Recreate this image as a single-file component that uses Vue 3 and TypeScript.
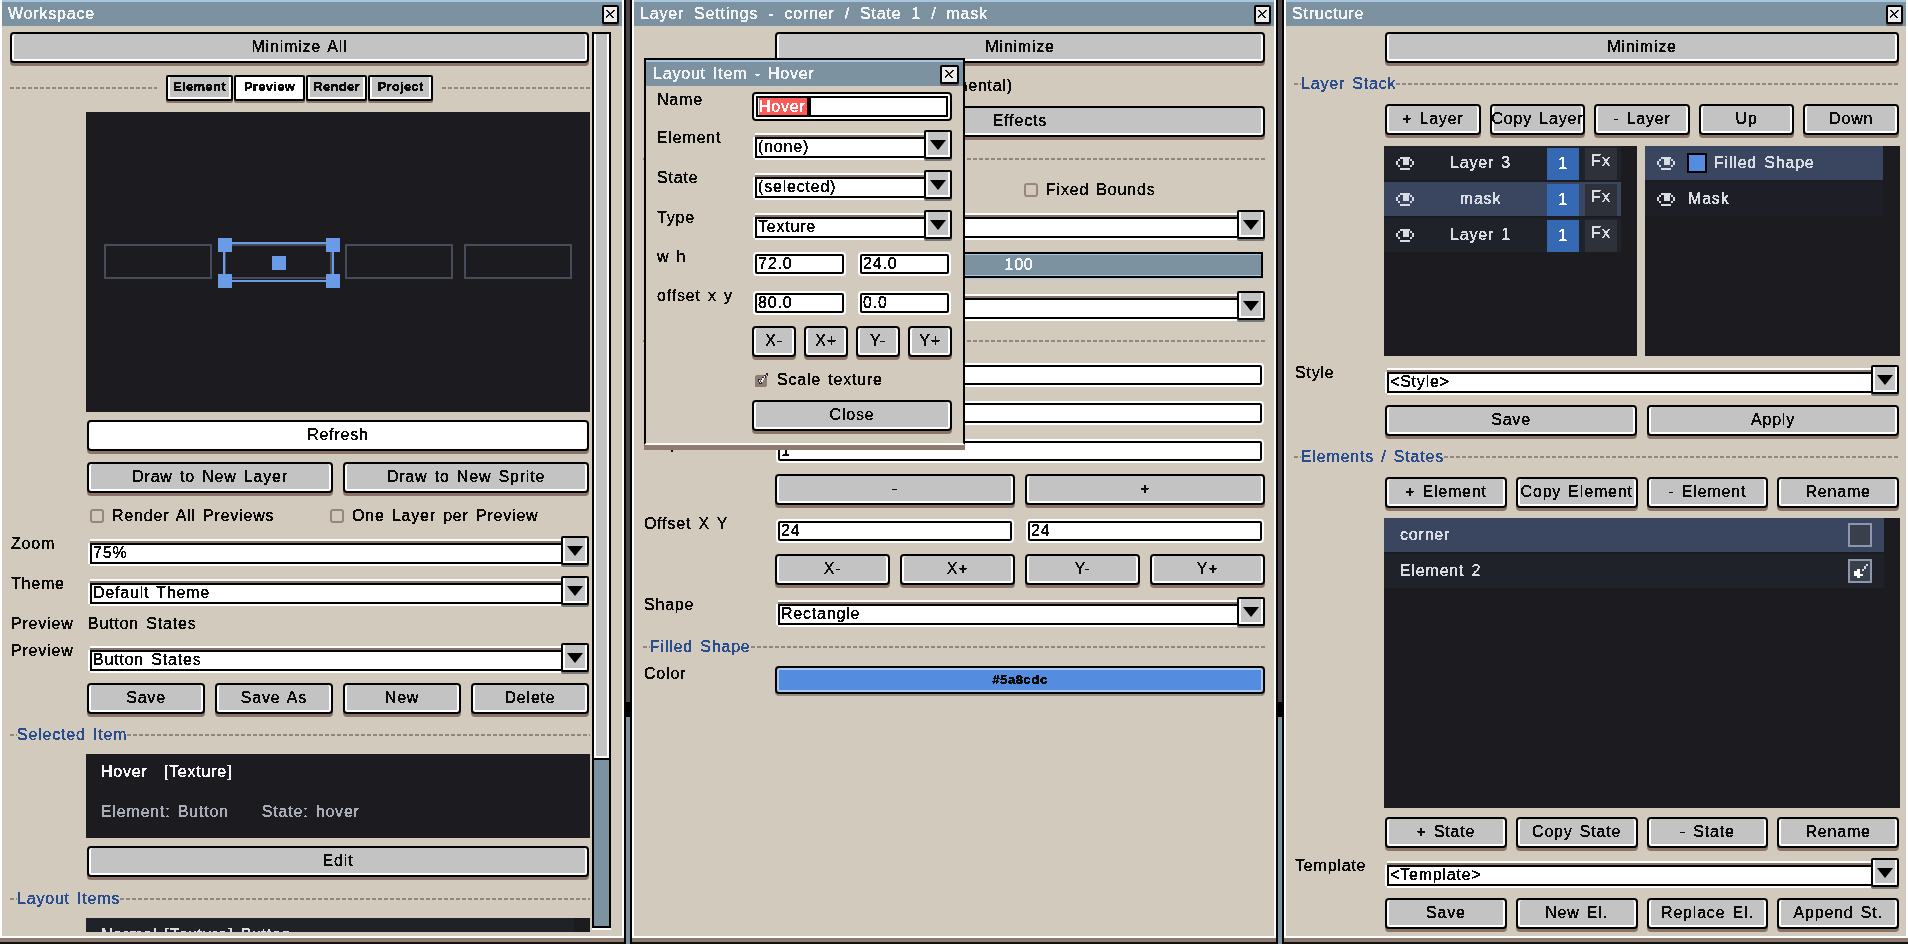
<script setup lang="ts">
const tabs = [
  { label: 'Element', active: false, cls: 'tab-el' },
  { label: 'Preview', active: true, cls: 'tab-pr' },
  { label: 'Render', active: false, cls: 'tab-re' },
  { label: 'Project', active: false, cls: 'tab-pj' }
]
const layers = [
  { name: 'Layer 3', selected: false },
  { name: 'mask', selected: true },
  { name: 'Layer 1', selected: false }
]
const presetBtns = ['Save', 'Save As', 'New', 'Delete']
const nudge = ['X-', 'X+', 'Y-', 'Y+']
const layerBtns = ['+ Layer', 'Copy Layer', '- Layer', 'Up', 'Down']
const elementBtns = ['+ Element', 'Copy Element', '- Element', 'Rename']
const stateBtns = ['+ State', 'Copy State', '- State', 'Rename']
const templateBtns = ['Save', 'New El.', 'Replace El.', 'Append St.']
const eyePath = 'M4 0h10v2H4zM2 2h2v2H2zM14 2h2v2h-2zM0 4h2v4H0zM16 4h2v4h-2zM2 8h2v2H2zM14 8h2v2h-2zM7 2h6v6H7zM4 11h10v2H4z'
const closePath = 'M0 0h2v1h1v1h1v1h1v-1h1v-1h1v-1h2v1h-1v1h-1v1h-1v1h-1v1h1v1h1v1h1v1h-2v-1h-1v-1h-1v-1h-1v1h-1v1h-1v1h-2v-1h1v-1h1v-1h1v-1h1v-1h-1v-1h-1v-1h-1z'
</script>

<template>
  <div class="app">
    <svg class="defs" width="0" height="0" aria-hidden="true">
      <filter id="px" color-interpolation-filters="sRGB" x="-5%" y="-10%" width="110%" height="120%">
        <feComponentTransfer>
          <feFuncA type="discrete" tableValues="0 1 1 1" />
        </feComponentTransfer>
      </filter>
    </svg>

    <!-- Workspace -->
    <section class="win w1">
      <header class="title">
        <span class="t">Workspace</span>
        <button class="close" aria-label="Close"><svg viewBox="0 0 9 9" width="9" height="9"><path :d="closePath" fill="#111" shape-rendering="crispEdges"/></svg></button>
      </header>
      <div class="w1-body">
        <div class="scroll-content">
          <button class="btn"><span class="t">Minimize All</span></button>
          <div class="tabs-row mt11">
            <i class="dash grow"></i>
            <div class="tabs">
              <button v-for="tab in tabs" :key="tab.label" class="tab" :class="[tab.cls, { active: tab.active }]"><span class="t">{{ tab.label }}</span></button>
            </div>
            <i class="dash tabs-right"></i>
          </div>
          <div class="indent-dark preview mt10">
            <svg viewBox="0 0 504 300" width="504" height="300" shape-rendering="crispEdges">
              <g fill="none" stroke="#464c5a" stroke-width="2">
                <rect x="19" y="133" width="106" height="33" />
                <rect x="139" y="133" width="106" height="33" />
                <rect x="260" y="133" width="106" height="33" />
                <rect x="379" y="133" width="106" height="33" />
              </g>
              <rect x="138" y="131" width="109" height="38" fill="none" stroke="#6a9be6" stroke-width="2" />
              <g fill="#6a9be6">
                <rect x="132" y="126" width="14" height="14" />
                <rect x="240" y="126" width="14" height="14" />
                <rect x="132" y="162" width="14" height="14" />
                <rect x="240" y="162" width="14" height="14" />
                <rect x="186" y="144" width="14" height="14" />
              </g>
            </svg>
          </div>
          <div class="indent mt8"><button class="btn white"><span class="t">Refresh</span></button></div>
          <div class="indent btns g10 mt11">
            <button class="btn"><span class="t">Draw to New Layer</span></button>
            <button class="btn"><span class="t">Draw to New Sprite</span></button>
          </div>
          <div class="indent checks mt15">
            <label class="check-row cr-a"><i class="check"></i><span class="t">Render All Previews</span></label>
            <label class="check-row"><i class="check"></i><span class="t">One Layer per Preview</span></label>
          </div>
          <div class="row w1-row mt12">
            <span class="t lbl">Zoom</span>
            <div class="select">
              <div class="select-field"><span class="t">75%</span></div>
              <button class="select-btn" aria-label="Open"><i class="tri"></i></button>
            </div>
          </div>
          <div class="row w1-row mt10">
            <span class="t lbl">Theme</span>
            <div class="select">
              <div class="select-field"><span class="t">Default Theme</span></div>
              <button class="select-btn" aria-label="Open"><i class="tri"></i></button>
            </div>
          </div>
          <div class="row w1-row mt10 short">
            <span class="t lbl">Preview</span>
            <span class="t lbl value">Button States</span>
          </div>
          <div class="row w1-row mt11">
            <span class="t lbl">Preview</span>
            <div class="select">
              <div class="select-field"><span class="t">Button States</span></div>
              <button class="select-btn" aria-label="Open"><i class="tri"></i></button>
            </div>
          </div>
          <div class="indent btns g10 mt10">
            <button v-for="b in presetBtns" :key="b" class="btn"><span class="t">{{ b }}</span></button>
          </div>
          <div class="section mt13"><i class="dash short-dash"></i><span class="t">Selected Item</span><i class="dash grow"></i></div>
          <div class="indent-dark info mt11">
            <div class="info-top"><span class="t">Hover</span><span class="t">[Texture]</span></div>
            <div class="info-sub"><span class="t">Element: Button</span><span class="t">State: hover</span></div>
          </div>
          <div class="indent mt8"><button class="btn"><span class="t">Edit</span></button></div>
          <div class="section mt14"><i class="dash short-dash"></i><span class="t">Layout Items</span><i class="dash grow"></i></div>
          <div class="indent-dark clipped mt11"><div class="clipped-row"><span class="t">Normal [Texture]  Button</span></div></div>
        </div>
        <div class="scrollbar">
          <div class="sb-thumb"></div>
          <div class="sb-track"></div>
        </div>
      </div>
    </section>

    <div class="gutter"><i class="g-top"></i><i class="g-mid"></i><i class="g-low"></i></div>

    <!-- Layer Settings -->
    <section class="win w2">
      <header class="title wide-title">
        <span class="t">Layer Settings - corner / State 1 / mask</span>
        <button class="close" aria-label="Close"><svg viewBox="0 0 9 9" width="9" height="9"><path :d="closePath" fill="#111" shape-rendering="crispEdges"/></svg></button>
      </header>
      <div class="w2-body">
        <div class="row w2-row"><span></span><button class="btn"><span class="t">Minimize</span></button></div>
        <div class="row w2-row mt15 short"><span></span><span class="t exp">Clip to Mask (Experimental)</span></div>
        <div class="row w2-row mt12"><span></span><button class="btn"><span class="t">Effects</span></button></div>
        <i class="dash mt21"></i>
        <div class="row w2-row mt22 short">
          <span></span>
          <label class="check-row fixed"><i class="check"></i><span class="t">Fixed Bounds</span></label>
        </div>
        <div class="row w2-row mt12">
          <span></span>
          <div class="select narrow"><div class="select-field"></div><button class="select-btn" aria-label="Open"><i class="tri"></i></button></div>
        </div>
        <div class="row w2-row mt12">
          <span></span>
          <div class="slider"><span class="t">100</span></div>
        </div>
        <div class="row w2-row mt13">
          <span></span>
          <div class="select narrow"><div class="select-field"></div><button class="select-btn" aria-label="Open"><i class="tri"></i></button></div>
        </div>
        <i class="dash mt19"></i>
        <div class="row w2-row mt21"><span></span><div class="input"></div></div>
        <div class="row w2-row mt14"><span></span><div class="input"></div></div>
        <div class="row w2-row mt14">
          <span class="t lbl up">Step</span>
          <div class="input"><span class="t">1</span></div>
        </div>
        <div class="row w2-row mt11">
          <span></span>
          <div class="btns g10"><button class="btn"><span class="t">-</span></button><button class="btn"><span class="t">+</span></button></div>
        </div>
        <div class="row w2-row mt14">
          <span class="t lbl up">Offset X Y</span>
          <div class="inputs">
            <div class="input"><span class="t">24</span></div>
            <div class="input"><span class="t">24</span></div>
          </div>
        </div>
        <div class="row w2-row mt11">
          <span></span>
          <div class="btns g10"><button v-for="b in nudge" :key="b" class="btn"><span class="t">{{ b }}</span></button></div>
        </div>
        <div class="row w2-row mt12">
          <span class="t lbl">Shape</span>
          <div class="select narrow">
            <div class="select-field"><span class="t">Rectangle</span></div>
            <button class="select-btn" aria-label="Open"><i class="tri"></i></button>
          </div>
        </div>
        <div class="section mt12"><i class="dash short-dash"></i><span class="t">Filled Shape</span><i class="dash grow"></i></div>
        <div class="row w2-row mt11">
          <span class="t lbl">Color</span>
          <button class="btn color"><span class="t">#5a8cdc</span></button>
        </div>
      </div>

      <!-- floating dialog -->
      <div class="dialog">
        <header class="title d-title">
          <span class="t">Layout Item - Hover</span>
          <button class="close" aria-label="Close"><svg viewBox="0 0 9 9" width="9" height="9"><path :d="closePath" fill="#111" shape-rendering="crispEdges"/></svg></button>
        </header>
        <div class="d-body">
          <div class="d-row">
            <span class="t lbl">Name</span>
            <div class="focus-input"><div class="focus-inner"><span class="sel"><span class="t">Hover</span></span><i class="caret"></i></div></div>
          </div>
          <div class="d-row mt9">
            <span class="t lbl">Element</span>
            <div class="select d-sel"><div class="select-field"><span class="t">(none)</span></div><button class="select-btn" aria-label="Open"><i class="tri"></i></button></div>
          </div>
          <div class="d-row mt10">
            <span class="t lbl">State</span>
            <div class="select d-sel"><div class="select-field"><span class="t">(selected)</span></div><button class="select-btn" aria-label="Open"><i class="tri"></i></button></div>
          </div>
          <div class="d-row mt10">
            <span class="t lbl">Type</span>
            <div class="select d-sel"><div class="select-field"><span class="t">Texture</span></div><button class="select-btn" aria-label="Open"><i class="tri"></i></button></div>
          </div>
          <div class="d-row mt12">
            <span class="t lbl up">w h</span>
            <div class="inputs d-inputs"><div class="input"><span class="t">72.0</span></div><div class="input"><span class="t">24.0</span></div></div>
          </div>
          <div class="d-row mt15">
            <span class="t lbl up">offset x y</span>
            <div class="inputs d-inputs"><div class="input"><span class="t">80.0</span></div><div class="input"><span class="t">0.0</span></div></div>
          </div>
          <div class="d-row mt11">
            <span></span>
            <div class="btns g8"><button v-for="b in nudge" :key="b" class="btn"><span class="t">{{ b }}</span></button></div>
          </div>
          <div class="d-row mt15 short">
            <span></span>
            <label class="check-row scale">
              <svg class="checked" viewBox="0 0 14 14" width="14" height="14" shape-rendering="crispEdges">
                <rect x="0" y="2" width="12" height="12" rx="2" fill="#8d7d72" />
                <path d="M3 6h2v2h1V6h1V4h2V2h2V0h2v3h-2v2H9v2H8v2H7v2H4V9H3z" fill="#26232a" />
                <path d="M4 7h1v2h1V7h1V5h2V3h2V2h1v1h-2v2H9v2H8v2H6v1H5V9H4z" fill="#f4f4f4" />
              </svg>
              <span class="t">Scale texture</span>
            </label>
          </div>
          <div class="d-row mt12"><span></span><button class="btn"><span class="t">Close</span></button></div>
        </div>
      </div>
    </section>

    <div class="gutter"><i class="g-top"></i><i class="g-mid"></i><i class="g-low"></i></div>

    <!-- Structure -->
    <section class="win w3">
      <header class="title">
        <span class="t">Structure</span>
        <button class="close" aria-label="Close"><svg viewBox="0 0 9 9" width="9" height="9"><path :d="closePath" fill="#111" shape-rendering="crispEdges"/></svg></button>
      </header>
      <div class="w3-body">
        <div class="row w3-row"><span></span><button class="btn"><span class="t">Minimize</span></button></div>
        <div class="section mt13"><i class="dash short-dash"></i><span class="t">Layer Stack</span><i class="dash grow"></i></div>
        <div class="row w3-row mt12">
          <span></span>
          <div class="btns g9"><button v-for="b in layerBtns" :key="b" class="btn"><span class="t">{{ b }}</span></button></div>
        </div>
        <div class="row w3-row mt11">
          <span></span>
          <div class="lists">
            <div class="list left-list">
              <div v-for="layer in layers" :key="layer.name" class="layer" :class="{ selected: layer.selected }">
                <svg class="eye" viewBox="0 0 18 13" width="18" height="13" shape-rendering="crispEdges"><path :d="eyePath" fill="#d8dce4" /></svg>
                <span class="layer-name"><span class="t">{{ layer.name }}</span></span>
                <span class="badge"><span class="t">1</span></span>
                <span class="fx"><span class="t">Fx</span></span>
              </div>
            </div>
            <div class="list right-list">
              <div class="item selected">
                <svg class="eye" viewBox="0 0 18 13" width="18" height="13" shape-rendering="crispEdges"><path :d="eyePath" fill="#d8dce4" /></svg>
                <i class="swatch"></i>
                <span class="t">Filled Shape</span>
              </div>
              <div class="item">
                <svg class="eye" viewBox="0 0 18 13" width="18" height="13" shape-rendering="crispEdges"><path :d="eyePath" fill="#d8dce4" /></svg>
                <span class="t mask-name">Mask</span>
              </div>
            </div>
          </div>
        </div>
        <div class="row w3-row mt9">
          <span class="t lbl">Style</span>
          <div class="select wide"><div class="select-field"><span class="t">&lt;Style&gt;</span></div><button class="select-btn" aria-label="Open"><i class="tri"></i></button></div>
        </div>
        <div class="row w3-row mt10">
          <span></span>
          <div class="btns g10"><button class="btn"><span class="t">Save</span></button><button class="btn"><span class="t">Apply</span></button></div>
        </div>
        <div class="section mt13"><i class="dash short-dash"></i><span class="t">Elements / States</span><i class="dash grow"></i></div>
        <div class="row w3-row mt12">
          <span></span>
          <div class="btns g9"><button v-for="b in elementBtns" :key="b" class="btn"><span class="t">{{ b }}</span></button></div>
        </div>
        <div class="row w3-row mt10">
          <span></span>
          <div class="list element-list">
            <div class="element selected">
              <span class="t">corner</span>
              <i class="state-box"></i>
            </div>
            <div class="element">
              <span class="t">Element 2</span>
              <svg class="state-icon" viewBox="0 0 24 24" width="24" height="24" shape-rendering="crispEdges">
                <rect x="1" y="1" width="22" height="22" fill="#3a3f4c" stroke="#8c97ad" stroke-width="2" />
                <path d="M6 12h3v-2h3v5h3v2h-3v2H9v-2H6z" fill="#fff" />
                <path d="M14 10h2V7h2V5h2v2h-2v3h-2v2h-2z" fill="#d8dce4" />
              </svg>
            </div>
          </div>
        </div>
        <div class="row w3-row mt9">
          <span></span>
          <div class="btns g9"><button v-for="b in stateBtns" :key="b" class="btn"><span class="t">{{ b }}</span></button></div>
        </div>
        <div class="row w3-row mt10">
          <span class="t lbl">Template</span>
          <div class="select wide"><div class="select-field"><span class="t">&lt;Template&gt;</span></div><button class="select-btn" aria-label="Open"><i class="tri"></i></button></div>
        </div>
        <div class="row w3-row mt10">
          <span></span>
          <div class="btns g9"><button v-for="b in templateBtns" :key="b" class="btn"><span class="t">{{ b }}</span></button></div>
        </div>
      </div>
    </section>
  </div>
</template>

<style scoped>
.app {
  display: flex;
  width: 1908px;
  height: 944px;
  overflow: hidden;
  background: #111;
  font-family: "Liberation Sans", Arial, sans-serif;
  font-size: 16px;
  line-height: 16px;
  letter-spacing: 0.8px;
  word-spacing: 2px;
  color: #0c0c0c;
}
.defs {
  position: absolute;
}
.t {
  filter: url(#px);
  white-space: pre;
}
i {
  display: block;
}
.mt8 { margin-top: 8px; }
.mt9 { margin-top: 9px; }
.mt10 { margin-top: 10px; }
.mt11 { margin-top: 11px; }
.mt12 { margin-top: 12px; }
.mt13 { margin-top: 13px; }
.mt14 { margin-top: 14px; }
.mt15 { margin-top: 15px; }
.mt19 { margin-top: 19px; }
.mt21 { margin-top: 21px; }
.mt22 { margin-top: 22px; }

/* windows */
.win {
  position: relative;
  flex: none;
  display: flex;
  flex-direction: column;
  box-sizing: border-box;
  background: #d2cabd;
  border-left: 2px solid #fff;
  border-bottom: 2px solid #fff;
  box-shadow: 0 4px 0 #8f7b6e;
  height: 938px;
}
.w1 { width: 624px; border-right: 2px solid #fff; }
.w2 { width: 644px; border-right: 2px solid #fff; }
.w3 { width: 624px; border-right: 2px solid #fff; }
.title {
  flex: none;
  height: 26px;
  box-sizing: border-box;
  border-top: 2px solid #a9c6e0;
  background: #7d92a1;
  color: #f1f4f6;
  display: flex;
  align-items: center;
  justify-content: space-between;
  padding: 0 3px 0 6px;
}
.wide-title {
  word-spacing: 4.8px;
}
.close {
  width: 17px;
  height: 19px;
  padding: 0;
  box-sizing: border-box;
  border: 2px solid #000;
  border-radius: 2px;
  background: #ececec;
  box-shadow: 0 2px 0 #5b5560;
  display: flex;
  align-items: center;
  justify-content: center;
}
.gutter {
  flex: none;
  width: 8px;
  height: 944px;
  box-sizing: border-box;
  border-left: 2px solid #000;
  border-right: 2px solid #000;
  display: flex;
  flex-direction: column;
}
.g-top { height: 702px; background: #4d4249; }
.g-mid { height: 15px; background: #000; }
.g-low { flex: 1; background: #7d92a1; }

/* buttons */
.btn {
  display: flex;
  align-items: center;
  justify-content: center;
  width: 100%;
  height: 31px;
  min-width: 0;
  padding: 0 0 2px;
  box-sizing: border-box;
  overflow: hidden;
  font: inherit;
  letter-spacing: inherit;
  word-spacing: inherit;
  color: #0c0c0c;
  background: #c3c3c3;
  border: 2px solid #000;
  border-radius: 4px;
  box-shadow: inset 2px 0 #fff, inset -2px 0 #fff, inset 0 -2px #fff, 0 3px 0 #8a7468;
}
.btn.white {
  background: #fff;
}
.btn.color {
  height: 28px;
  padding: 0;
  background: #548cdf;
  box-shadow: inset 0 2px #a8c8f0, inset 2px 0 #a8c8f0, inset -2px 0 #a8c8f0, inset 0 -2px #a8c8f0, 0 2px 0 #8f8f88;
  font-size: 13px;
  font-weight: 700;
  letter-spacing: 0.6px;
}
.btns {
  display: flex;
}
.btns .btn {
  flex: 1 1 0;
}
.g8 { gap: 8px; }
.g9 { gap: 9px; }
.g10 { gap: 10px; }

/* dashes and section heads */
.dash {
  height: 2px;
  background: repeating-linear-gradient(90deg, #96857a 0 4px, transparent 4px 6px);
}
.grow {
  flex: 1;
}
.short-dash {
  width: 7px;
  flex: none;
}
.section {
  display: flex;
  align-items: center;
  height: 16px;
  color: #2a4e8f;
}

/* workspace */
.w1-body {
  display: flex;
  padding: 6px 0 0 8px;
  gap: 2px;
}
.scroll-content {
  width: 580px;
  height: 900px;
  overflow: hidden;
}
.scroll-content > .btn {
  width: 579px;
}
.scroll-content .section {
  width: 580px;
}
.indent {
  margin-left: 77px;
  width: 502px;
}
.indent-dark {
  margin-left: 76px;
  width: 504px;
  background: #1b1b20;
}
.tabs-row {
  display: flex;
  align-items: center;
  height: 28px;
}
.tabs {
  display: flex;
  margin: 0 9px;
  gap: 1px;
}
.tabs-right {
  width: 148px;
}
.tab {
  height: 26px;
  padding: 0 0 2px;
  box-sizing: border-box;
  font: inherit;
  font-size: 13px;
  font-weight: 700;
  letter-spacing: 0.3px;
  color: #0c0c0c;
  background: #c3c3c3;
  border: 2px solid #000;
  border-radius: 2px;
  box-shadow: inset 2px 0 #fff, inset -2px 0 #fff, inset 0 -2px #fff, 0 2px 0 #8a7468;
}
.tab.active {
  background: #fff;
}
.tab-el { width: 67px; }
.tab-pr { width: 71px; }
.tab-re { width: 61px; }
.tab-pj { width: 65px; }
.preview {
  height: 300px;
}
.preview svg {
  display: block;
}
.checks {
  display: flex;
  height: 16px;
  padding-left: 3px;
}
.check-row {
  display: flex;
  align-items: center;
  gap: 8px;
  height: 16px;
}
.cr-a {
  width: 240px;
}
.check {
  width: 14px;
  height: 14px;
  box-sizing: border-box;
  border: 2px solid #98867a;
  border-radius: 3px;
}
.row {
  display: grid;
  align-items: start;
}
.w1-row {
  grid-template-columns: 80px 1fr;
  width: 579px;
}
.short {
  height: 16px;
}
.lbl {
  display: block;
  padding-left: 1px;
}
.value {
  margin-left: -3px;
}
.up {
  margin-top: -3px;
}

/* select */
.select {
  display: flex;
  height: 30px;
  align-items: flex-start;
}
.select-field {
  flex: 1;
  min-width: 0;
  height: 21px;
  margin-top: 7px;
  padding: 0 0 2px 1px;
  box-sizing: border-box;
  display: flex;
  align-items: center;
  background: #fff;
  border-top: 2px solid #000;
  border-bottom: 2px solid #000;
  border-left: 2px solid #000;
  box-shadow: 0 -2px 0 #8a7468, 0 -4px 0 #fff, -2px 0 0 #fff, 0 2px 0 #fff;
  overflow: hidden;
}
.select-btn {
  flex: none;
  width: 28px;
  height: 29px;
  padding: 0;
  box-sizing: border-box;
  background: #c3c3c3;
  border: 2px solid #000;
  border-radius: 2px;
  box-shadow: inset 2px 0 #fff, inset -2px 0 #fff, inset 0 -2px #fff, 0 2px 0 #777;
  display: flex;
  align-items: center;
  justify-content: center;
}
.tri {
  width: 0;
  height: 0;
  border-left: 8px solid transparent;
  border-right: 8px solid transparent;
  border-top: 10px solid #000;
}
.select.narrow {
  margin-left: 3px;
}

/* inputs */
.input {
  height: 20px;
  margin: 2px 3px;
  padding-left: 1px;
  box-sizing: border-box;
  display: flex;
  align-items: center;
  background: #fff;
  border: 2px solid #000;
  border-radius: 2px;
  box-shadow: 0 0 0 2px #fff;
}
.inputs {
  display: grid;
  grid-template-columns: 1fr 1fr;
  column-gap: 10px;
}

/* layer settings */
.w2-body {
  display: flex;
  flex-direction: column;
  padding: 6px 9px 0;
}
.w2-row {
  grid-template-columns: 132px 1fr;
}
.exp {
  display: block;
  width: 238px;
  text-align: right;
}
.fixed {
  margin-left: 249px;
}
.slider {
  height: 26px;
  margin-right: 2px;
  box-sizing: border-box;
  display: flex;
  align-items: center;
  justify-content: center;
  background: #7d92a1;
  color: #f4f6f8;
  border: 2px solid #000;
  box-shadow: inset 0 -1px #a9c6e0, inset 0 1px #a9c6e0, 0 1px 0 #a9c6e0;
}
.w2 .dash,
.w3 .dash {
  flex-shrink: 0;
}

/* dialog */
.dialog {
  position: absolute;
  left: 10px;
  top: 58px;
  width: 321px;
  height: 387px;
  box-sizing: border-box;
  background: #d2cabd;
  border: 2px solid #000;
  border-bottom: 2px solid #fff;
  box-shadow: 0 5px 0 #8f7b6e;
}
.d-title {
  padding: 0 3px 0 7px;
}
.d-title .close {
  width: 19px;
  margin-right: 1px;
}
.d-body {
  padding: 6px 11px 0 10px;
}
.d-row {
  display: grid;
  grid-template-columns: 96px 1fr;
  align-items: start;
}
.d-sel {
  margin-left: 3px;
}
.d-inputs {
  column-gap: 10px;
}
.focus-input {
  height: 29px;
  box-sizing: border-box;
  padding: 2px;
  background: #fff;
  border: 2px solid #000;
  border-radius: 4px;
}
.focus-inner {
  height: 21px;
  box-sizing: border-box;
  border: 2px solid #000;
  display: flex;
  padding-left: 1px;
  background: #fff;
}
.sel {
  display: flex;
  align-items: center;
  background: #ff5a5a;
  color: #fff;
  padding-right: 1px;
}
.caret {
  width: 4px;
  background: #000;
}
.scale {
  margin-left: 3px;
  gap: 8px;
}
.checked {
  display: block;
  flex: none;
}

/* structure */
.w3-body {
  display: flex;
  flex-direction: column;
  padding: 6px 7px 0 8px;
}
.w3-row {
  grid-template-columns: 91px 1fr;
}
.lists {
  display: grid;
  grid-template-columns: 253px 255px;
  column-gap: 8px;
  margin: 0 -1px;
  height: 210px;
}
.list {
  background: #1b1b20;
  color: #d8dce4;
}
.layer {
  display: flex;
  align-items: center;
  width: 237px;
  height: 34px;
  margin-bottom: 2px;
  background: #20222a;
}
.layer.selected,
.item.selected,
.element.selected {
  background: #3a465f;
}
.eye {
  flex: none;
  display: block;
  margin-left: 12px;
}
.layer-name {
  flex: none;
  width: 133px;
  text-align: center;
}
.badge {
  flex: none;
  width: 32px;
  height: 32px;
  margin-top: 2px;
  background: #3569b4;
  color: #fff;
  display: flex;
  align-items: center;
  justify-content: center;
}
.fx {
  flex: none;
  width: 32px;
  height: 32px;
  margin-top: 2px;
  margin-left: 6px;
  padding-top: 5px;
  box-sizing: border-box;
  background: #2f313a;
  text-align: center;
}
.item {
  display: flex;
  align-items: center;
  width: 238px;
  height: 34px;
  margin-bottom: 2px;
  background: #1e1f26;
}
.swatch {
  flex: none;
  width: 20px;
  height: 20px;
  margin: 0 7px 0 12px;
  box-sizing: border-box;
  border: 2px solid #000;
  background: #548cdf;
}
.mask-name {
  margin-left: 13px;
}
.select.wide {
  margin-left: 2px;
}
.element-list {
  height: 290px;
  margin: 0 -1px;
}
.element {
  display: flex;
  align-items: center;
  justify-content: space-between;
  width: 500px;
  height: 34px;
  margin-bottom: 2px;
  padding: 0 12px 0 16px;
  box-sizing: border-box;
  background: #20222a;
}
.state-box {
  width: 24px;
  height: 24px;
  box-sizing: border-box;
  border: 2px solid #8c97ad;
  background: #3a3f4c;
}
.state-icon {
  display: block;
}
.info {
  height: 84px;
  padding: 10px 15px 0;
  box-sizing: border-box;
  color: #f4f4f4;
}
.info-top {
  display: flex;
  gap: 16px;
  height: 16px;
}
.info-sub {
  display: flex;
  gap: 33px;
  margin-top: 24px;
  color: #a8acb8;
}
.clipped {
  height: 40px;
  box-sizing: border-box;
  color: #d8dce4;
}
.clipped-row {
  width: 488px;
  height: 40px;
  padding: 9px 15px 0;
  box-sizing: border-box;
  background: #20222a;
}

/* scrollbar */
.scrollbar {
  width: 19px;
  flex: none;
  display: flex;
  flex-direction: column;
}
.sb-thumb {
  height: 728px;
  box-sizing: border-box;
  background: #c3c3c3;
  border: 2px solid #000;
  box-shadow: inset 2px 0 #fff, inset -2px 0 #fff, inset 0 -2px #fff;
}
.sb-track {
  height: 168px;
  box-sizing: border-box;
  background: #7d92a1;
  border: 2px solid #000;
  border-top: none;
  box-shadow: 0 2px 0 #fff;
}
</style>

<style>
html,
body {
  margin: 0;
  background: #111;
}
</style>
